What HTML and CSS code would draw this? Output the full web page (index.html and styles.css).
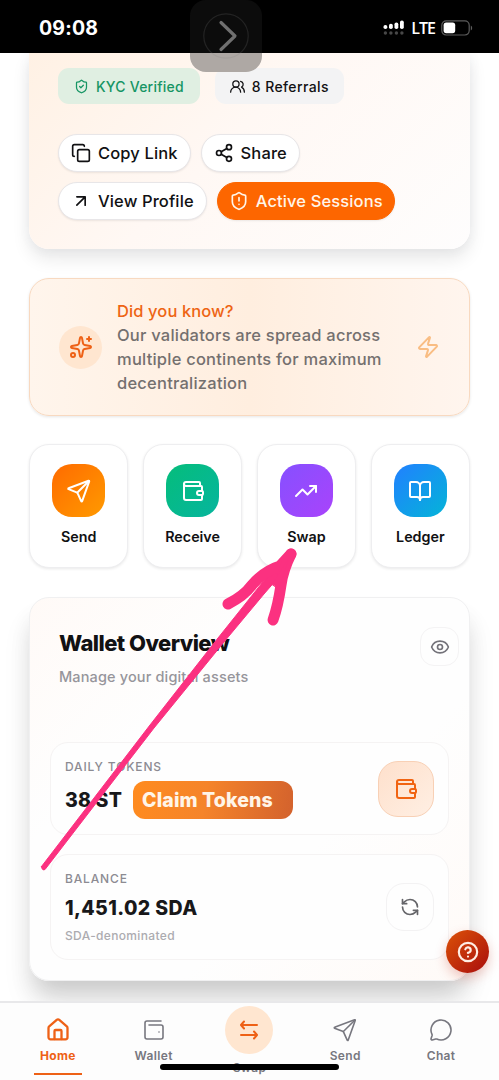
FILE: index.html
```html
<!DOCTYPE html>
<html lang="en">
<head>
    <meta charset="UTF-8">
    <meta name="viewport" content="width=device-width, initial-scale=1.0">
    <title>Wallet</title>
    <link rel="stylesheet" href="styles.css">
</head>
<body>
    <!-- Shared icons -->
    <svg class="icon-defs" width="0" height="0">
        <symbol id="send" viewBox="0 0 24 24">
            <path d="M14.2 22.200a.5.5 0 0 0 .937-.024L22.200 2.400a.496.496 0 0 0-.635-.635L1.600 9.200a.5.5 0 0 0-.024.937l8 3.180a2 2 0 0 1 1.112 1.110z"/>
            <path d="m22 2-11.600 11.500"/>
        </symbol>
        <symbol id="wallet" viewBox="0 0 24 24">
            <path d="M19 7V4a1 1 0 0 0-1-1H5a2 2 0 0 0 0 4h15a1 1 0 0 1 1 1v4h-3a2 2 0 0 0 0 4h3a1 1 0 0 0 1-1v-2a1 1 0 0 0-1-1"/>
            <path d="M3 5v14a2 2 0 0 0 2 2h15a1 1 0 0 0 1-1v-4"/>
        </symbol>
    </svg>

    <header class="status-bar">
        <span class="time">09:08</span>
        <div class="status-right">
            <svg class="signal" width="22" height="16" viewBox="0 0 22 16">
                <g fill="#fff">
                    <rect x="0.5" y="5" width="3.800" height="4" rx="1.800"/>
                    <rect x="6" y="3.800" width="3.800" height="5.200" rx="1.800"/>
                    <rect x="11.500" y="2.400" width="3.800" height="6.600" rx="1.800"/>
                    <rect x="17" y="0.500" width="3.800" height="8.500" rx="1.800"/>
                </g>
                <g fill="#484848">
                    <circle cx="2.400" cy="13" r="1.700"/>
                    <circle cx="7.900" cy="13" r="1.700"/>
                    <circle cx="13.400" cy="13" r="1.700"/>
                    <circle cx="18.900" cy="13" r="1.700"/>
                </g>
            </svg>
            <span class="network">LTE</span>
            <svg class="battery" width="32" height="16" viewBox="0 0 32 16">
                <rect x="0.8" y="0.8" width="27.4" height="14.2" rx="4.4" fill="none" stroke="#5c5c5c" stroke-width="1.2"/>
                <rect x="2.6" y="2.6" width="11.6" height="10.6" rx="2.6" fill="#fff"/>
                <path d="M29.8 5.4c1.8.8 1.8 4.2 0 5z" fill="#5c5c5c"/>
            </svg>
        </div>
    </header>

    <div class="assist">
        <svg width="46" height="46" viewBox="0 0 46 46" fill="none">
            <path d="M2.600 40h40.800M1 40A22.200 22.200 0 1 1 45 40" stroke="none"/>
            <circle cx="23" cy="23" r="22.2" stroke="#808080" stroke-opacity="0.2" stroke-width="1.2"/>
            <path d="M18 9.500l14 13.500-14 13.500" stroke="#707070" stroke-width="3.200" stroke-linecap="round" stroke-linejoin="round"/>
        </svg>
    </div>

    <main class="content">
        <section class="profile-card">
            <div class="badges">
                <span class="badge badge-green">
                    <svg class="icon" width="15" height="15" viewBox="0 0 24 24">
                        <path d="M20 13c0 5-3.500 7.500-7.660 8.950a1 1 0 0 1-.67-.01C7.500 20.500 4 18 4 13V6a1 1 0 0 1 1-1c2 0 4.500-1.200 6.240-2.720a1.170 1.170 0 0 1 1.520 0C14.510 3.810 17 5 19 5a1 1 0 0 1 1 1z"/>
                        <path d="m9 12 2 2 4-4"/>
                    </svg>
                    KYC Verified
                </span>
                <span class="badge badge-gray">
                    <svg class="icon" width="15" height="15" viewBox="0 0 24 24">
                        <path d="M17 21a8 8 0 0 0-16 0"/>
                        <circle cx="9.500" cy="8" r="5"/>
                        <path d="M23 21c0-3.500-1.500-6.500-4.500-8a5 5 0 0 0-1.500-9.300"/>
                    </svg>
                    8 Referrals
                </span>
            </div>
            <div class="buttons">
                <button class="btn">
                    <svg class="icon" width="20" height="20" viewBox="0 0 24 24">
                        <rect x="8" y="8" width="14" height="14" rx="2"/>
                        <path d="M4 16c-1.100 0-2-.9-2-2V4c0-1.100.9-2 2-2h10c1.100 0 2 .9 2 2"/>
                    </svg>
                    Copy Link
                </button>
                <button class="btn">
                    <svg class="icon" width="20" height="20" viewBox="0 0 24 24">
                        <circle cx="18" cy="5" r="3"/>
                        <circle cx="6" cy="12" r="3"/>
                        <circle cx="18" cy="19" r="3"/>
                        <path d="m8.590 13.510 6.830 3.980M15.410 6.510l-6.820 3.980"/>
                    </svg>
                    Share
                </button>
                <button class="btn">
                    <svg class="icon" width="20" height="20" viewBox="0 0 24 24">
                        <path d="M7 7h10v10M7 17 17 7"/>
                    </svg>
                    View Profile
                </button>
                <button class="btn btn-primary">
                    <svg class="icon" width="20" height="20" viewBox="0 0 24 24">
                        <path d="M20 13c0 5-3.500 7.500-7.660 8.950a1 1 0 0 1-.67-.01C7.500 20.500 4 18 4 13V6a1 1 0 0 1 1-1c2 0 4.500-1.200 6.240-2.720a1.170 1.170 0 0 1 1.520 0C14.510 3.810 17 5 19 5a1 1 0 0 1 1 1z"/>
                        <path d="M12 8v4M12 16h.01"/>
                    </svg>
                    Active Sessions
                </button>
            </div>
        </section>

        <section class="tip-card">
            <div class="tip-icon">
                <svg class="icon" width="24" height="24" viewBox="0 0 24 24">
                    <path d="M11.017 2.814a1 1 0 0 1 1.966 0l1.051 5.558a2 2 0 0 0 1.594 1.594l5.558 1.051a1 1 0 0 1 0 1.966l-5.558 1.051a2 2 0 0 0-1.594 1.594l-1.051 5.558a1 1 0 0 1-1.966 0l-1.051-5.558a2 2 0 0 0-1.594-1.594l-5.558-1.051a1 1 0 0 1 0-1.966l5.558-1.051a2 2 0 0 0 1.594-1.594z"/>
                    <path d="M20 2v4M22 4h-4"/>
                    <circle cx="4" cy="20" r="2"/>
                </svg>
            </div>
            <div class="tip-text">
                <h3>Did you know?</h3>
                <p>Our validators are spread across multiple continents for maximum decentralization</p>
            </div>
            <svg class="icon tip-zap" width="24" height="24" viewBox="0 0 24 24">
                <path d="M4 14a1 1 0 0 1-.78-1.630l9.900-10.200a.5.5 0 0 1 .86.46l-1.920 6.020A1 1 0 0 0 13 10h7a1 1 0 0 1 .78 1.630l-9.900 10.200a.5.5 0 0 1-.86-.46l1.920-6.020A1 1 0 0 0 11 14z"/>
            </svg>
        </section>

        <section class="actions">
            <div class="action">
                <div class="action-icon orange">
                    <svg class="icon" width="24" height="24"><use href="#send"/></svg>
                </div>
                <span>Send</span>
            </div>
            <div class="action">
                <div class="action-icon green">
                    <svg class="icon" width="24" height="24"><use href="#wallet"/></svg>
                </div>
                <span>Receive</span>
            </div>
            <div class="action">
                <div class="action-icon purple">
                    <svg class="icon" width="24" height="24" viewBox="0 0 24 24">
                        <path d="M16 7h6v6"/>
                        <path d="m22 7-8.500 8.500-5-5L2 17"/>
                    </svg>
                </div>
                <span>Swap</span>
            </div>
            <div class="action">
                <div class="action-icon blue">
                    <svg class="icon" width="24" height="24" viewBox="0 0 24 24">
                        <path d="M12 7v14"/>
                        <path d="M3 18a1 1 0 0 1-1-1V4a1 1 0 0 1 1-1h5a4 4 0 0 1 4 4 4 4 0 0 1 4-4h5a1 1 0 0 1 1 1v13a1 1 0 0 1-1 1h-6a3 3 0 0 0-3 3 3 3 0 0 0-3-3z"/>
                    </svg>
                </div>
                <span>Ledger</span>
            </div>
        </section>

        <section class="wallet-card">
            <div class="wallet-head">
                <div>
                    <h2>Wallet Overview</h2>
                    <p>Manage your digital assets</p>
                </div>
                <button class="eye-btn">
                    <svg class="icon" width="20" height="20" viewBox="0 0 24 24">
                        <path d="M2.062 12.348a1 1 0 0 1 0-.696 10.750 10.750 0 0 1 19.876 0 1 1 0 0 1 0 .696 10.750 10.750 0 0 1-19.876 0"/>
                        <circle cx="12" cy="12" r="3"/>
                    </svg>
                </button>
            </div>
            <div class="box box-tokens">
                <div>
                    <div class="label">DAILY TOKENS</div>
                    <div class="token-row">
                        <span class="amount">38 ST</span>
                        <button class="claim">Claim Tokens</button>
                    </div>
                </div>
                <div class="box-icon">
                    <svg class="icon" width="24" height="24"><use href="#wallet"/></svg>
                </div>
            </div>
            <div class="box box-balance">
                <div>
                    <div class="label">BALANCE</div>
                    <div class="amount">1,451.02 SDA</div>
                    <div class="note">SDA-denominated</div>
                </div>
                <button class="refresh">
                    <svg class="icon" width="20" height="20" viewBox="0 0 24 24">
                        <path d="M21 12a9 9 0 0 0-9-9 9.750 9.750 0 0 0-6.740 2.740L3 8"/>
                        <path d="M3 3v5h5"/>
                        <path d="M3 12a9 9 0 0 0 9 9 9.750 9.750 0 0 0 6.740-2.740L21 16"/>
                        <path d="M16 16h5v5"/>
                    </svg>
                </button>
            </div>
        </section>
    </main>

    <nav class="bottom-nav">
        <a class="nav-item active">
            <svg class="icon" width="24" height="24" viewBox="0 0 24 24">
                <path d="M15.500 21v-8a1 1 0 0 0-1-1h-5a1 1 0 0 0-1 1v8"/>
                <path d="M2.500 10a2 2 0 0 1 .709-1.528l7.500-6.500a2 2 0 0 1 2.582 0l7.500 6.500A2 2 0 0 1 21.500 10v9.300a2 2 0 0 1-2 2h-15a2 2 0 0 1-2-2z"/>
            </svg>
            <span>Home</span>
        </a>
        <a class="nav-item">
            <svg class="icon" width="24" height="24" viewBox="0 0 24 24">
                <path d="M17 14h.01"/>
                <path d="M7 7h12a2 2 0 0 1 2 2v10a2 2 0 0 1-2 2H5a2 2 0 0 1-2-2V5a2 2 0 0 1 2-2h14"/>
            </svg>
            <span>Wallet</span>
        </a>
        <a class="nav-item nav-swap">
            <div class="swap-circle">
                <svg class="icon" width="24" height="24" viewBox="0 0 24 24">
                    <path d="m7 3.500-3 3.500 3 3.500M4 7h16M17 13.500l3 3.500-3 3.500M20 17H4"/>
                </svg>
            </div>
            <span>Swap</span>
        </a>
        <a class="nav-item">
            <svg class="icon" width="24" height="24"><use href="#send"/></svg>
            <span>Send</span>
        </a>
        <a class="nav-item">
            <svg class="icon" width="24" height="24" viewBox="0 0 24 24">
                <path d="M2.992 16.342a2 2 0 0 1 .094 1.167l-1.065 3.290a1 1 0 0 0 1.236 1.168l3.413-.998a2 2 0 0 1 1.099.092 10 10 0 1 0-4.777-4.719"/>
            </svg>
            <span>Chat</span>
        </a>
    </nav>

    <div class="home-indicator"></div>

    <button class="help">
        <svg class="icon" width="22" height="22" viewBox="0 0 24 24">
            <circle cx="12" cy="12" r="10"/>
            <path d="M9.090 9a3 3 0 0 1 5.830 1c0 2-3 3-3 3M12 17h.01"/>
        </svg>
    </button>

    <!-- Hand drawn arrow -->
    <svg class="arrow" width="499" height="1080" viewBox="0 0 499 1080">
        <path d="M41.500 866.500 L150 725 L218 638 L258 588 L282 558 L290 564 L264 594 L224 642 L154 728 L45 869.500 Q42 871 41.500 866.500Z"/>
        <path d="M228 604 Q244 596 252 585 Q264 571 280 566 L291 554" fill="none" stroke-width="11"/>
        <path d="M291 554 Q283 570 281 585 Q278 606 273 620" fill="none" stroke-width="11"/>
        <path d="M272 584 L289 558 L279 589Z"/>
    </svg>
</body>
</html>
```

FILE: styles.css
```css
* {
    box-sizing: border-box;
}

body {
    margin: 0;
    height: 1080px;
    display: flex;
    flex-direction: column;
    overflow: hidden;
    position: relative;
    background: #fff;
    color: #111113;
    font-family: Inter, 'Liberation Sans', sans-serif;
}

h2, h3, p {
    margin: 0;
}

button {
    font-family: inherit;
    padding: 0;
    margin: 0;
}

.icon {
    fill: none;
    stroke: currentColor;
    stroke-width: 2;
    stroke-linecap: round;
    stroke-linejoin: round;
    flex: none;
}

.icon-defs {
    position: absolute;
}

/* Status bar */
.status-bar {
    flex: none;
    height: 53px;
    padding: 2px 26px 0 39px;
    background: #000;
    color: #fff;
    display: flex;
    align-items: center;
    justify-content: space-between;
    z-index: 2;
}

.time {
    font-size: 19.5px;
    line-height: 24px;
    font-weight: 700;
    letter-spacing: 0.2px;
}

.status-right {
    display: flex;
    align-items: center;
}

.signal {
    margin-right: 6px;
}

.network {
    margin-right: 6px;
    font: 600 16px/20px 'Open Sans', sans-serif;
    letter-spacing: -1px;
}

.assist {
    position: absolute;
    z-index: 3;
    left: 190px;
    top: 0;
    width: 72px;
    height: 72px;
    padding: 13px;
    border-radius: 16px;
    background: linear-gradient(#0c0c0c 53px, #aea8a4 53px);
}

.assist svg {
    display: block;
}

/* Page */
.content {
    flex: 1;
    min-height: 0;
    padding: 0 29px;
    display: flex;
    flex-direction: column;
}

.profile-card {
    flex: none;
    height: 196px;
    padding: 15px 29px 0;
    border-radius: 0 0 20px 20px;
    background: linear-gradient(135deg, #fff1e4 0%, #fff8f4 45%, #fefdfd 100%);
    box-shadow: 0 10px 18px rgba(0, 0, 0, 0.09), 0 0 12px rgba(80, 100, 130, 0.07);
}

.badges {
    display: flex;
    gap: 15px;
}

.badge {
    display: flex;
    align-items: center;
    height: 36px;
    gap: 7px;
    padding: 0 16px;
    border-radius: 11px;
    font-size: 14px;
    font-weight: 500;
    letter-spacing: 0.22px;
}

.badge-green {
    background: #e0efe2;
    color: #169564;
}

.badge-gray {
    padding: 0 15px;
    background: #f3f3f4;
    letter-spacing: 0.4px;
}

.buttons {
    display: flex;
    flex-wrap: wrap;
    gap: 10px;
    margin-top: 30px;
}

.btn {
    display: flex;
    align-items: center;
    gap: 7px;
    height: 38px;
    padding: 0 12px;
    border: 1px solid #e8e6e8;
    border-radius: 19px;
    background: #fff;
    color: #111113;
    font-size: 16.5px;
    font-weight: 500;
    letter-spacing: 0.12px;
    box-shadow: 0 1px 2px rgba(0, 0, 0, 0.08);
}

.btn-primary {
    padding: 0 11px;
    background: #fd6600;
    border-color: #fd6600;
    color: #fff5e9;
}

/* Did you know */
.tip-card {
    flex: none;
    height: 138px;
    margin-top: 29px;
    padding: 0 29px;
    display: flex;
    align-items: center;
    border: 1.5px solid #f8d9c0;
    border-radius: 20px;
    background: linear-gradient(90deg, #fff5ec, #ffeedf 50%, #fff5ee);
    box-shadow: 0 1px 3px rgba(0, 0, 0, 0.1);
}

.tip-icon {
    flex: none;
    width: 43px;
    height: 43px;
    border-radius: 50%;
    background: #ffe6d0;
    color: #ee6116;
    display: flex;
    align-items: center;
    justify-content: center;
}

.tip-text {
    width: 290px;
    margin-left: 15px;
    font-size: 16.5px;
    line-height: 24px;
    font-weight: 500;
    letter-spacing: 0.22px;
    color: #74706f;
}

.tip-text h3 {
    font-size: inherit;
    font-weight: 500;
    letter-spacing: 0.1px;
    color: #ee6414;
}

.tip-zap {
    margin-left: auto;
    color: #f9bd83;
}

/* Quick actions */
.actions {
    flex: none;
    display: grid;
    grid-template-columns: repeat(4, 1fr);
    gap: 14.5px;
    margin-top: 28px;
}

.action {
    height: 124px;
    padding-top: 19px;
    display: flex;
    flex-direction: column;
    align-items: center;
    border: 1px solid #eeeef0;
    border-radius: 20px;
    background: #fff;
    box-shadow: 0 1px 3px rgba(0, 0, 0, 0.09);
    font-size: 14.3px;
    line-height: 20px;
    font-weight: 600;
}

.action-icon {
    width: 53px;
    height: 53px;
    margin-bottom: 10px;
    border-radius: 20px;
    color: #fff;
    display: flex;
    align-items: center;
    justify-content: center;
}

.orange {
    background: linear-gradient(135deg, #ff6b00, #ff9a00);
}

.green {
    background: linear-gradient(135deg, #05bd7b, #06b59e);
}

.purple {
    background: linear-gradient(135deg, #8650ff, #a943fb);
}

.blue {
    background: linear-gradient(135deg, #2180ff, #04b4d8);
}

/* Wallet overview */
.wallet-card {
    flex: none;
    height: 384px;
    margin-top: 29px;
    padding: 29px 20px 0;
    border: 1px solid #f0f0f1;
    border-radius: 20px;
    background: linear-gradient(135deg, #fffaf7, #fefefe 30%, #fefefe 65%, #fffaf7);
    box-shadow: 0 18px 24px -6px rgba(0, 0, 0, 0.16), 0 22px 30px rgba(0, 0, 0, 0.07);
}

.wallet-head {
    display: flex;
    justify-content: space-between;
    height: 115px;
    padding-left: 9px;
    margin-right: -10px;
}

.wallet-head h2 {
    margin-top: 2px;
    font-size: 22px;
    line-height: 28px;
    font-weight: 800;
    letter-spacing: -0.55px;
}

.wallet-head p {
    margin-top: 10px;
    font-size: 14.5px;
    line-height: 20px;
    font-weight: 500;
    letter-spacing: 0.14px;
    color: #96959b;
}

.eye-btn {
    width: 39px;
    height: 39px;
    display: flex;
    align-items: center;
    justify-content: center;
    border: 1px solid #f4f3f4;
    border-radius: 14px;
    background: #fefefe;
    color: #737279;
}

.box {
    display: flex;
    align-items: center;
    justify-content: space-between;
    padding: 0 14px;
    border: 1px solid #f5f3f3;
    border-radius: 18px;
    background: #fefefe;
}

.box-tokens {
    height: 93px;
}

.box-balance {
    height: 106px;
    margin-top: 19px;
}

.label {
    font-size: 12px;
    line-height: 18px;
    font-weight: 500;
    letter-spacing: 0.85px;
    color: #8c8b92;
}

.token-row {
    display: flex;
    align-items: center;
    gap: 11px;
    margin-top: 5px;
}

.amount {
    font-size: 19.5px;
    font-weight: 800;
    line-height: 28px;
    letter-spacing: 0.2px;
    color: #18181a;
}

.box-balance .amount {
    margin-top: 6px;
    letter-spacing: 0.4px;
}

.claim {
    width: 160px;
    height: 38px;
    padding-left: 9px;
    border: none;
    border-radius: 12px;
    background: linear-gradient(100deg, #ff8b1f, #f5842a 45%, #d3622d);
    color: #fff5e8;
    font-size: 19.5px;
    font-weight: 800;
    letter-spacing: 0.1px;
    text-align: left;
}

.note {
    margin-top: 5px;
    font-size: 12px;
    line-height: 18px;
    font-weight: 500;
    letter-spacing: 0.35px;
    color: #acabb0;
}

.box-icon {
    width: 56px;
    height: 56px;
    display: flex;
    align-items: center;
    justify-content: center;
    border: 1px solid #f8d0b5;
    border-radius: 20px;
    background: linear-gradient(135deg, #fee0cc, #ffefe3);
    color: #f16412;
}

.refresh {
    width: 48px;
    height: 48px;
    display: flex;
    align-items: center;
    justify-content: center;
    border: 1px solid #f3f2f3;
    border-radius: 18px;
    background: #fefefe;
    color: #656569;
}

/* Bottom navigation */
.bottom-nav {
    flex: none;
    height: 79px;
    padding: 0 10px;
    display: grid;
    grid-template-columns: repeat(5, 1fr);
    background: #fdfdfd;
    border-top: 2px solid #e8e8ea;
    z-index: 1;
}

.nav-item {
    height: 72px;
    padding-top: 15px;
    display: flex;
    flex-direction: column;
    align-items: center;
    font-size: 12px;
    line-height: 16px;
    font-weight: 600;
    letter-spacing: 0.35px;
    color: #77777f;
}

.nav-item .icon {
    stroke-width: 1.6;
    margin-bottom: 6px;
}

.nav-item.active {
    width: 48px;
    justify-self: center;
    color: #ee6116;
    border-bottom: 2px solid #ee6116;
    font-weight: 700;
}

.nav-item.active .icon {
    stroke-width: 2.3;
}

.nav-item.nav-swap {
    padding-top: 3px;
}

.swap-circle {
    flex: none;
    width: 48px;
    height: 48px;
    margin-bottom: 6px;
    border-radius: 50%;
    background: #ffe6d0;
    color: #ee6116;
    display: flex;
    align-items: center;
    justify-content: center;
}

.nav-item .swap-circle .icon {
    margin: 0;
    stroke-width: 2;
}

.home-indicator {
    position: absolute;
    z-index: 2;
    left: 160px;
    top: 1064px;
    width: 179px;
    height: 6px;
    border-radius: 3px;
    background: #000;
}

.help {
    position: absolute;
    z-index: 3;
    left: 446px;
    top: 930px;
    width: 43px;
    height: 43px;
    display: flex;
    align-items: center;
    justify-content: center;
    border: none;
    border-radius: 50%;
    background: linear-gradient(135deg, #dc5208, #a80d0d);
    color: #ffede4;
    box-shadow: 0 5px 12px rgba(190, 40, 20, 0.25);
}

.help .icon {
    stroke-width: 2.4;
}

.arrow {
    position: absolute;
    z-index: 4;
    left: 0;
    top: 0;
    fill: #fb3180;
    stroke: #fb3180;
    stroke-width: 1;
    stroke-linecap: round;
    stroke-linejoin: round;
    pointer-events: none;
}
```
